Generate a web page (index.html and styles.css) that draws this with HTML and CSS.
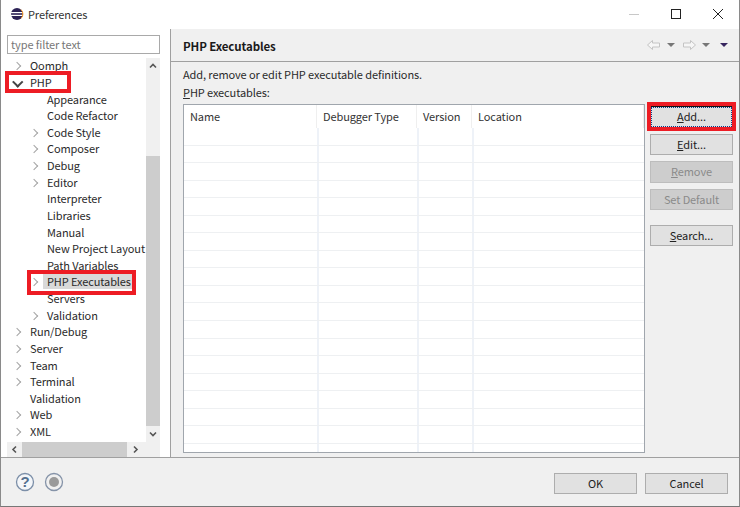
FILE: index.html
```html
<!DOCTYPE html>
<html lang="en">
<head>
<meta charset="utf-8">
<title>Preferences</title>
<link rel="stylesheet" href="styles.css">
</head>
<body>
<div class="window">
  <header class="titlebar">
    <svg class="app-icon" width="14" height="14" viewBox="0 0 14 14"><circle cx="7" cy="7" r="6" fill="#2c2255"/><rect x="0.500" y="5" width="13" height="1.200" fill="#fff"/><rect x="0.500" y="7.800" width="13" height="1.200" fill="#fff"/><path d="M11 2.600a6 6 0 0 1 0 8.800" stroke="#f7941e" stroke-width="1" fill="none"/></svg>
    <span class="title">Preferences</span>
    <div class="winctl">
      <svg width="12" height="12" viewBox="0 0 12 12"><path d="M1 6.500h10" stroke="#c8c8c8"/></svg>
      <svg width="12" height="12" viewBox="0 0 12 12"><rect x="1.500" y="1.500" width="9" height="9" fill="none" stroke="#222"/></svg>
      <svg width="12" height="12" viewBox="0 0 12 12"><path d="M1 1l10 10M11 1L1 11" stroke="#222" fill="none"/></svg>
    </div>
  </header>
  <div class="main">
    <aside class="side">
      <input class="filter" placeholder="type filter text">
      <div class="treewrap">
        <div class="treebox">
          <ul class="tree">
            <li class="row l0"><i class="tw c"></i>Oomph</li>
            <li class="row l0"><i class="tw o"></i>PHP</li>
            <li class="row l1"><i class="tw"></i>Appearance</li>
            <li class="row l1"><i class="tw"></i>Code Refactor</li>
            <li class="row l1"><i class="tw c"></i>Code Style</li>
            <li class="row l1"><i class="tw c"></i>Composer</li>
            <li class="row l1"><i class="tw c"></i>Debug</li>
            <li class="row l1"><i class="tw c"></i>Editor</li>
            <li class="row l1"><i class="tw"></i>Interpreter</li>
            <li class="row l1"><i class="tw"></i>Libraries</li>
            <li class="row l1"><i class="tw"></i>Manual</li>
            <li class="row l1"><i class="tw"></i>New Project Layout</li>
            <li class="row l1"><i class="tw"></i>Path Variables</li>
            <li class="row l1"><i class="tw c"></i><span class="sel">PHP Executables</span></li>
            <li class="row l1"><i class="tw"></i>Servers</li>
            <li class="row l1"><i class="tw c"></i>Validation</li>
            <li class="row l0"><i class="tw c"></i>Run/Debug</li>
            <li class="row l0"><i class="tw c"></i>Server</li>
            <li class="row l0"><i class="tw c"></i>Team</li>
            <li class="row l0"><i class="tw c"></i>Terminal</li>
            <li class="row l0"><i class="tw"></i>Validation</li>
            <li class="row l0"><i class="tw c"></i>Web</li>
            <li class="row l0"><i class="tw c"></i>XML</li>
          </ul>
          <div class="vbar">
            <svg class="sb-arrow" width="14" height="16" viewBox="0 0 14 16"><path d="M4 9.500l3-3 3 3" fill="none" stroke="#555" stroke-width="1.600"/></svg>
            <div class="vtrack"><div class="vthumb"></div></div>
            <svg class="sb-arrow" width="14" height="16" viewBox="0 0 14 16"><path d="M4 6.500l3 3 3-3" fill="none" stroke="#555" stroke-width="1.600"/></svg>
          </div>
        </div>
        <div class="hbar">
          <svg width="15" height="15" viewBox="0 0 15 15"><path d="M9 4.500l-3 3 3 3" fill="none" stroke="#555" stroke-width="1.600"/></svg>
          <div class="hthumb"></div>
          <svg class="harrow-r" width="15" height="15" viewBox="0 0 15 15"><path d="M6 4.500l3 3-3 3" fill="none" stroke="#555" stroke-width="1.600"/></svg>
        </div>
      </div>
      <div class="mark mark-php"></div>
      <div class="mark mark-exec"></div>
    </aside>
    <section class="page">
      <div class="pagehead">
        <h1>PHP Executables</h1>
        <div class="nav">
          <svg width="16" height="12" viewBox="0 0 16 12"><path d="M1.500 6l5-4.500v2.500h7v4h-7v2.500z" fill="#f6f6f6" stroke="#c4c4c4"/></svg>
          <i class="drop"></i>
          <svg class="nav-fwd" width="16" height="12" viewBox="0 0 16 12"><path d="M14.500 6l-5-4.500v2.500h-7v4h7v2.500z" fill="#f6f6f6" stroke="#c4c4c4"/></svg>
          <i class="drop"></i>
          <i class="drop dark"></i>
        </div>
      </div>
      <div class="pagebody">
        <p class="desc">Add, remove or edit PHP executable definitions.</p>
        <p class="lbl"><u>P</u>HP executables:</p>
        <div class="content">
          <div class="table">
            <div class="thead">
              <div class="c1">Name</div><div class="c2">Debugger Type</div><div class="c3">Version</div><div class="c4">Location</div>
            </div>
            <div class="tbody">
              <div class="tr"></div><div class="tr"></div><div class="tr"></div><div class="tr"></div><div class="tr"></div>
              <div class="tr"></div><div class="tr"></div><div class="tr"></div><div class="tr"></div><div class="tr"></div>
              <div class="tr"></div><div class="tr"></div><div class="tr"></div><div class="tr"></div><div class="tr"></div>
              <div class="tr"></div><div class="tr"></div><div class="tr"></div>
            </div>
          </div>
          <div class="btns">
            <div class="addmark"><button class="btn focus"><u>A</u>dd...</button></div>
            <button class="btn"><u>E</u>dit...</button>
            <button class="btn off"><u>R</u>emove</button>
            <button class="btn off">Set Default</button>
            <button class="btn sep"><u>S</u>earch...</button>
          </div>
        </div>
      </div>
    </section>
  </div>
  <footer class="foot">
    <div class="helpicons">
      <svg width="20" height="20" viewBox="0 0 20 20"><circle cx="10" cy="10" r="8.500" fill="#f4f6f9" stroke="#7c8fa8" stroke-width="1.300"/><text x="10" y="15" text-anchor="middle" class="qm">?</text></svg>
      <svg width="20" height="20" viewBox="0 0 20 20"><circle cx="10" cy="10" r="8.500" fill="#f0f0f0" stroke="#8593a8" stroke-width="1.300"/><circle cx="10" cy="10" r="5" fill="#9a9a9a"/></svg>
    </div>
    <div class="okcancel">
      <button class="btn big">OK</button>
      <button class="btn big">Cancel</button>
    </div>
  </footer>
</div>
</body>
</html>
```
FILE: styles.css
```css
* { box-sizing: border-box; }
html, body { margin: 0; padding: 0; }
body { width: 740px; height: 507px; overflow: hidden; background: #fff; font-family: "Noto Sans CJK KR", "Noto Sans", sans-serif; font-size: 11px; letter-spacing: -0.1px; color: #222; }
.window { width: 740px; height: 507px; display: flex; flex-direction: column; border-left: 1px solid #8a8a8a; border-bottom: 1px solid #777; border-right: 1px solid #8a8a8a; }
.titlebar { height: 29px; flex: none; display: flex; align-items: center; padding-left: 9px; padding-bottom: 1px; background: #fff; }
.app-icon { margin-right: 4px; }
.title { color: #333; }
.winctl { margin-left: auto; display: flex; gap: 30px; padding-right: 15px; }
.main { flex: 1; display: flex; min-height: 0; position: relative; }
.side { width: 170px; flex: none; background: #fff; padding: 6px 9px 0 6px; border-right: 1px solid #a0a0a0; position: relative; }
.filter { display: block; width: 153px; height: 19px; border: 1px solid #a9a9a9; padding: 0 3px 2px; font: inherit; letter-spacing: inherit; background: #fff; }
.filter::placeholder { color: #777; }
.treewrap { margin-top: 4px; width: 153px; }
.treebox { display: flex; height: 384px; overflow: hidden; }
.tree { list-style: none; margin: -1px 0 0; padding: 0; flex: 1; min-width: 0; }
.row { height: 16.64px; display: flex; align-items: center; white-space: nowrap; color: #2a2a2a; line-height: 16px; }
.row.l0 { padding-left: 5px; }
.row.l1 { padding-left: 22px; }
.tw { width: 12px; height: 12px; margin-right: 6px; flex: none; position: relative; display: block; }
.tw.c::before { content: ""; position: absolute; left: 1.500px; top: 4px; width: 5px; height: 5px; border-top: 1.500px solid #a4a4a4; border-right: 1.500px solid #a4a4a4; transform: rotate(45deg); }
.tw.o::before { content: ""; position: absolute; left: 2px; top: 2px; width: 5.500px; height: 5.500px; border-bottom: 2px solid #444; border-right: 2px solid #444; transform: rotate(45deg); }
.sel { background: #d9d9d9; padding: 0 2px 0 4px; margin-left: -4px; }
.vbar { width: 14px; flex: none; background: #f0f0f0; display: flex; flex-direction: column; }
.sb-arrow { flex: none; display: block; }
.vtrack { flex: 1; padding-top: 82px; }
.vthumb { height: 270px; background: #cdcdcd; }
.hbar { height: 15px; display: flex; align-items: center; background: #f0f0f0; }
.hthumb { width: 105px; height: 15px; background: #cdcdcd; }
.harrow-r { margin-left: 1px; }
.mark { position: absolute; border: 4px solid #ed1c24; pointer-events: none; }
.mark-php { left: 4px; top: 42px; width: 66px; height: 22px; }
.mark-exec { left: 26px; top: 241px; width: 109px; height: 25px; }
.page { flex: 1; min-width: 0; background: #f0f0f0; display: flex; flex-direction: column; }
.pagehead { height: 33px; flex: none; display: flex; align-items: center; padding: 2px 0 0 12px; border-bottom: 1px solid #a0a0a0; }
h1 { margin: 0; font-size: 11.500px; font-weight: 700; color: #1a1a1a; }
.nav { margin-left: auto; display: flex; align-items: center; padding: 0 11px 2px 0; }
.nav-fwd { margin-left: 6px; }
.drop { display: block; width: 0; height: 0; margin-left: 5px; border-left: 4px solid transparent; border-right: 4px solid transparent; border-top: 4px solid #777; }
.drop.dark { margin-left: 10px; border-top-color: #37265f; }
.pagebody { flex: 1; padding: 3px 0 0 12px; min-height: 0; }
.desc, .lbl { margin: 0; line-height: 18px; color: #2a2a2a; }
.content { display: flex; margin-top: 3px; }
.table { width: 462px; height: 349px; border: 1px solid #a0a6ad; background: #fff; display: flex; flex-direction: column; overflow: hidden; }
.thead { display: grid; grid-template-columns: 133px 100px 55px 1fr; height: 23px; flex: none; color: #333; }
.thead > div { padding-left: 6px; height: 23px; line-height: 23px; border-right: 1px solid #efefef; }
.tbody { flex: 1; display: flex; flex-direction: column; background: linear-gradient(#eef2f8, #eef2f8) 133px 0/2px 100% no-repeat, linear-gradient(#eef2f8, #eef2f8) 233px 0/2px 100% no-repeat, linear-gradient(#eef2f8, #eef2f8) 288px 0/2px 100% no-repeat; }
.tr { height: 17.550px; flex: none; border-bottom: 1px solid #eef0f2; }
.btns { width: 83px; margin-left: 5px; display: flex; flex-direction: column; gap: 6px; margin-top: 2px; }
.addmark { position: relative; }
.addmark::after { content: ""; position: absolute; left: -3px; top: -4px; right: -3px; bottom: -3px; border: 4px solid #ed1c24; pointer-events: none; }
.btn { display: block; width: 83px; height: 21.500px; margin: 0; padding: 0; border: 1px solid #adadad; background: #e1e1e1; font: inherit; letter-spacing: inherit; color: #222; text-align: center; line-height: 17px; }
.btn.focus { border-color: #111; outline: 1px dotted #0a3f8a; outline-offset: -2px; }
.btn.off { background: #cdcdcd; border-color: #bdbdbd; color: #8a8a8a; }
.btn.sep { margin-top: 8.500px; }
.foot { height: 49px; flex: none; background: #f0f0f0; border-top: 1px solid #a0a0a0; display: flex; align-items: center; padding: 0 11px 0 14px; justify-content: space-between; }
.helpicons { display: flex; gap: 9px; margin-top: -1px; }
.qm { font-size: 15px; font-weight: 700; fill: #55708f; font-family: "Liberation Sans", sans-serif; }
.okcancel { display: flex; gap: 8px; margin-top: 2px; }
.btn.big { height: 21px; }
```
